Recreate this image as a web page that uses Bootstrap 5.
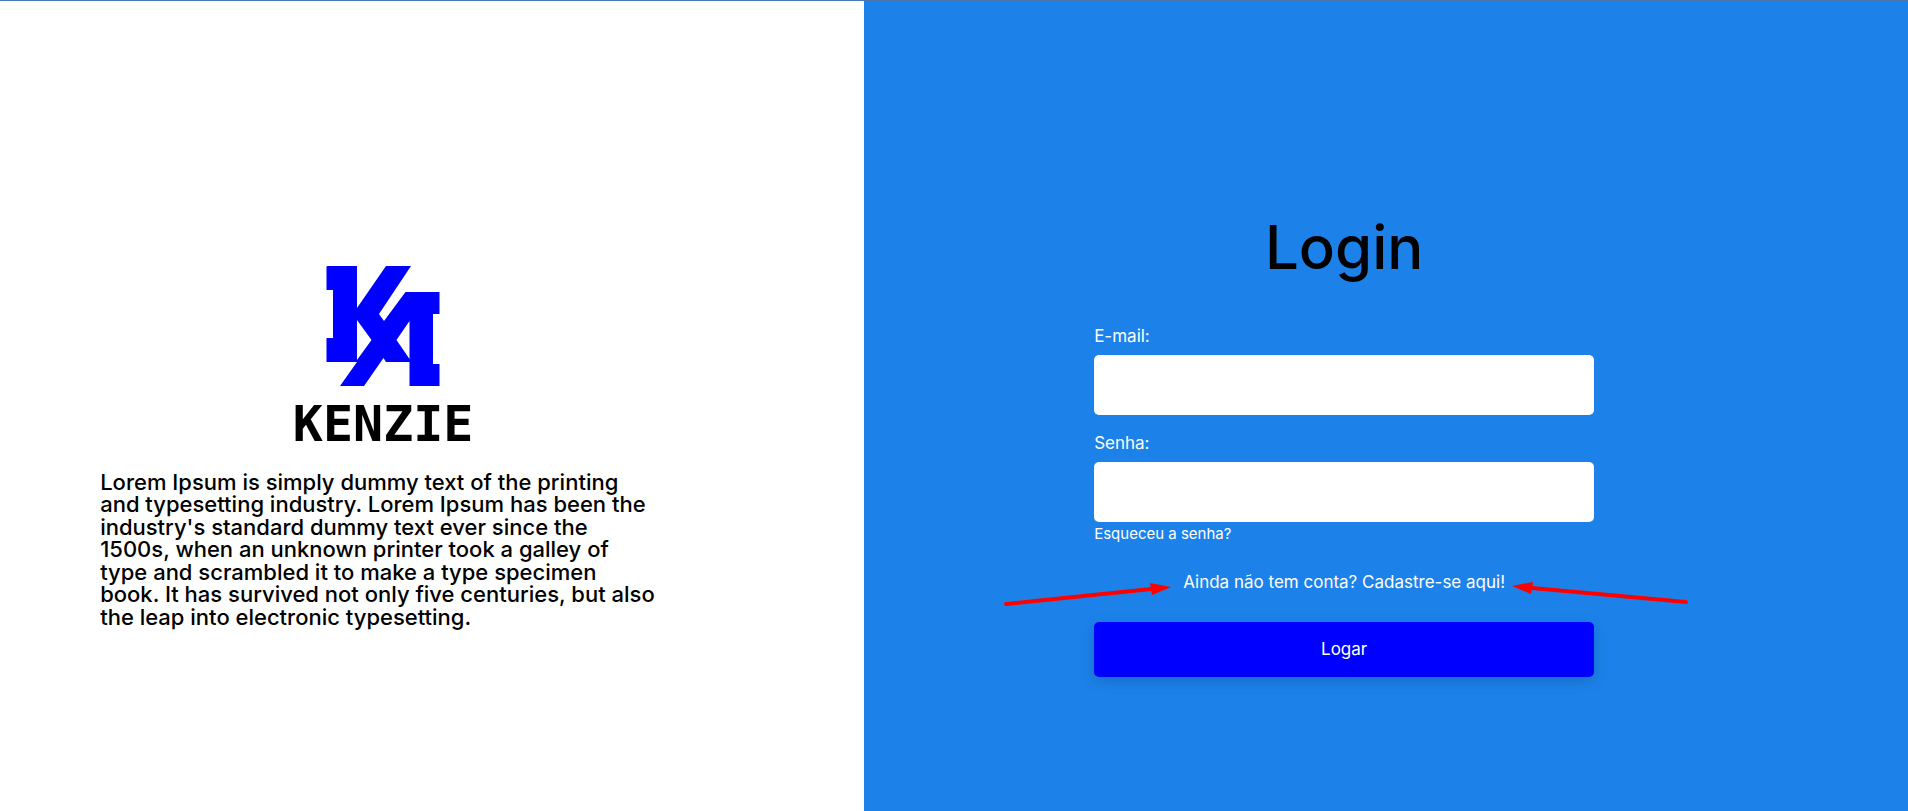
<!DOCTYPE html>
<html lang="pt-BR">
<head>
<meta charset="utf-8">
<meta name="viewport" content="width=device-width, initial-scale=1">
<title>Kenzie - Login</title>
<link href="https://cdn.jsdelivr.net/npm/bootstrap@5.3.0/dist/css/bootstrap.min.css" rel="stylesheet">
<style>
  body { font-family: Inter, "Liberation Sans", sans-serif; color: #000; }
  .page-shell { border-top: 1px solid #4878b4; }
  .brand-panel { background: #fff; padding: 48px 24px; }
  .login-panel { background: #1c82ea; padding: 48px 24px; }
  .brand-box { max-width: 566px; }
  .brand-mark { width: 114px; height: 121px; }
  .brand-name { font-family: "DejaVu Sans Mono", monospace; font-size: 50px; line-height: 58px; font-weight: 700; }
  .brand-text { font-size: 22px; line-height: 1.02; font-weight: 500; margin: 18px 0 0; padding-right: 6px; }
  .login-form { max-width: 500px; }
  .login-title { font-size: 60px; line-height: 76px; font-weight: 500; margin-bottom: 38px; }
  .field-label { font-size: 17px; line-height: 26px; margin-bottom: 6px; }
  .field-box { height: 60px; border: 0; border-radius: 5px; }
  .field-group { margin-bottom: 15px; }
  .forgot-link { font-size: 15px; line-height: 24px; }
  .signup-row { margin: 24px 0 28px; line-height: 24px; }
  .signup-link { font-size: 17px; }
  .submit-btn { height: 55px; padding-top: 8px; font-size: 17px; color: #fff; background: #00f; border: 0; border-radius: 5px; box-shadow: 0 4px 14px rgba(0, 0, 0, .18); }
  .submit-btn:hover { color: #fff; background: #0000d8; }
  .hint-arrow { position: absolute; top: 2px; display: none; }
  .hint-left { right: 100%; margin-right: 12px; }
  .hint-right { left: 100%; margin-left: 7px; }
  @media (min-width: 992px) {
    .brand-panel { width: 45.3%; padding: 82px 198px 0 100px; }
    .login-panel { width: 54.7%; padding: 73px 84px 0 0; }
    .hint-arrow { display: block; }
  }
</style>
</head>
<body>
<div class="page-shell d-flex flex-column flex-lg-row min-vh-100">
  <section class="brand-panel d-flex justify-content-center align-items-center">
    <div class="brand-box w-100 text-center">
      <svg class="brand-mark d-block mx-auto" viewBox="0 0 114 121" fill="#00f" aria-hidden="true">
        <path d="M0.500 1Q0.500 0 1.500 0H31V42L60 0H85L53 48L58 55L79.500 26H113.500V48H107V98H113.500V120H83.500V96H60L57.500 92L38 120H14L31 96H0.500V72H7V24H0.500ZM31 54V94L45.500 74ZM83.500 55L70.500 74L83.500 93Z" fill-rule="evenodd"/>
      </svg>
      <div class="brand-name mt-2">KENZIE</div>
      <p class="brand-text text-start">Lorem Ipsum is simply dummy text of the printing and typesetting industry. Lorem Ipsum has been the industry's standard dummy text ever since the 1500s, when an unknown printer took a galley of type and scrambled it to make a type specimen book. It has survived not only five centuries, but also the leap into electronic typesetting.</p>
    </div>
  </section>
  <main class="login-panel d-flex flex-grow-1 justify-content-center align-items-center">
    <form class="login-form w-100">
      <h1 class="login-title text-center">Login</h1>
      <div class="field-group">
        <label class="field-label d-block text-white" for="email">E-mail:</label>
        <input class="field-box form-control" id="email" type="email">
      </div>
      <div>
        <label class="field-label d-block text-white" for="senha">Senha:</label>
        <input class="field-box form-control" id="senha" type="password">
      </div>
      <a class="forgot-link d-block text-white text-decoration-none" href="#">Esqueceu a senha?</a>
      <div class="signup-row text-center">
        <span class="position-relative d-inline-block">
          <svg class="hint-arrow hint-left" width="168" height="36" viewBox="0 0 168 36" aria-hidden="true">
            <path d="M3 32L148 17" stroke="#f00" stroke-width="4" stroke-linecap="round"/>
            <path d="M147 11L168 15L149 23Z" fill="#f00"/>
          </svg>
          <a class="signup-link text-white text-decoration-none" href="#">Ainda não tem conta? Cadastre-se aqui!</a>
          <svg class="hint-arrow hint-right" width="178" height="36" viewBox="0 0 178 36" aria-hidden="true">
            <path d="M174 30L20 16" stroke="#f00" stroke-width="4" stroke-linecap="round"/>
            <path d="M21 10L0 14L19 22Z" fill="#f00"/>
          </svg>
        </span>
      </div>
      <button class="submit-btn btn w-100" type="submit">Logar</button>
    </form>
  </main>
</div>
<script src="https://cdn.jsdelivr.net/npm/bootstrap@5.3.0/dist/js/bootstrap.bundle.min.js"></script>
</body>
</html>
